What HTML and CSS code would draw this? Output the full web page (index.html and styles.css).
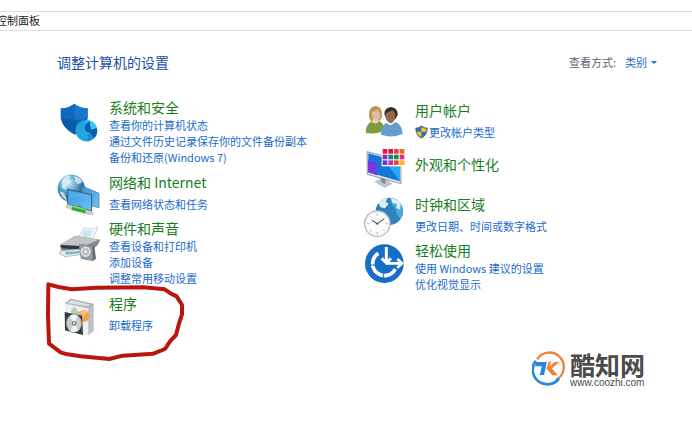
FILE: index.html
```html
<!DOCTYPE html>
<html lang="zh-CN">
<head>
<meta charset="utf-8">
<meta name="viewport" content="width=device-width, initial-scale=1">
<title>控制面板</title>
<link rel="stylesheet" href="styles.css">
</head>
<body>
<nav class="address">控制面板</nav>
<main class="panel">
  <header class="panel-head">
    <h1 class="title">调整计算机的设置</h1>
    <div class="view">
      <span id="view-label">查看方式:</span>
      <button class="view-button" type="button" aria-describedby="view-label">类别<span class="caret"></span></button>
    </div>
  </header>
  <div class="columns">
    <div class="column">
      <section class="category">
        <svg class="icon" viewBox="21 24 132 120" aria-hidden="true">
          <path d="M73 41Q88 54 113 55V87Q106 120 74 134Q38 116 32 84V55Q57 53 73 41Z" fill="#1268bd"/>
          <path d="M73 41Q88 54 113 55V83L73 91Z" fill="#1876cc"/>
          <path d="M33 84L80 90L76 133Q38 116 33 84Z" fill="#0b5bab"/>
          <circle cx="109" cy="122" r="32" fill="#20a7df"/>
          <path d="M109 122V90A32 32 0 0 1 132 145Z" fill="#43c4ee"/>
          <path d="M119 94Q104 101 105 116Q106 126 119 128L132 145Q145 132 140 114L123 119Z" fill="#075fae"/>
          <path d="M109 154A32 32 0 0 0 132 145L119 128Z" fill="#168bcd"/>
        </svg>
        <div class="body">
          <h2><a href="#">系统和安全</a></h2>
          <ul><li><a href="#">查看你的计算机状态</a></li><li><a href="#">通过文件历史记录保存你的文件备份副本</a></li><li><a href="#">备份和还原(Windows 7)</a></li></ul>
        </div>
      </section>
      <section class="category single">
        <svg class="icon" viewBox="21 21 132 120" aria-hidden="true">
          <defs><radialGradient id="globe" cx=".38" cy=".3"><stop offset="0" stop-color="#d2edf8"/><stop offset=".6" stop-color="#65aed3"/><stop offset="1" stop-color="#3177a6"/></radialGradient>
          <linearGradient id="screen" x2="1" y2="1"><stop stop-color="#3796e1"/><stop offset="1" stop-color="#68c4f3"/></linearGradient></defs>
          <circle cx="64" cy="70" r="41" fill="url(#globe)"/>
          <path d="M35 47Q46 30 62 33L57 43L65 50L51 60L47 74L36 68ZM73 33Q91 36 98 51L84 58L75 48ZM29 79L42 83L52 108Q32 96 29 79Z" fill="#e0eff2" opacity=".8"/>
          <path d="M96 63L147 85V129L96 112Z" fill="url(#screen)" stroke="#526d80" stroke-width="2"/>
          <path d="M53 73L125 89V138L53 119Z" fill="url(#screen)" stroke="#3f5c70" stroke-width="3"/>
          <path d="M56 77L123 93L56 99Z" fill="#75bff0" opacity=".35"/>
          <path d="M89 119V132" stroke="#778" stroke-width="6"/>
          <path d="M52 124L66 128M108 142L125 145" stroke="#c4ccce" stroke-width="12" stroke-linecap="round"/>
          <path d="M66 128L107 138" stroke="#3da345" stroke-width="15"/><path d="M67 124L108 134" stroke="#8ce077" stroke-width="4"/>
        </svg>
        <div class="body">
          <h2><a href="#">网络和 Internet</a></h2>
          <ul><li><a href="#">查看网络状态和任务</a></li></ul>
        </div>
      </section>
      <section class="category">
        <svg class="icon" viewBox="21 -3 132 120" aria-hidden="true">
          <path d="M83 54L102 23Q122 32 144 20L127 61Z" fill="#f3f8fb" stroke="#b8c0c5" stroke-width="2"/>
          <path d="M101 31L95 48L119 54L130 31Z" fill="#cee4f0"/>
          <path d="M30 74L76 47L151 59L143 75L108 106L34 95Z" fill="#85898b"/>
          <path d="M30 74L76 48L145 59L102 79Z" fill="#c2c5c6"/>
          <path d="M31 75L101 79L103 91L35 85Z" fill="#323a40"/>
          <path d="M32 92L94 87L100 103L45 110L28 101Z" fill="#e6ebed" stroke="#9ca4a8" stroke-width="2"/>
          <path d="M44 96L91 93L95 99L49 104Z" fill="#7fbac2"/>
          <path d="M87 72L133 77L138 116L129 123L93 116Z" fill="#626c74"/>
          <path d="M87 72L127 78L129 122L93 115Z" fill="#929ca2"/>
          <circle cx="107" cy="95" r="17" fill="#dadfe1" stroke="#7d878d" stroke-width="2"/><circle cx="107" cy="95" r="10" fill="#b4bcc0"/><circle cx="107" cy="95" r="4" fill="#fff"/>
        </svg>
        <div class="body">
          <h2><a href="#">硬件和声音</a></h2>
          <ul><li><a href="#">查看设备和打印机</a></li><li><a href="#">添加设备</a></li><li><a href="#">调整常用移动设置</a></li></ul>
        </div>
      </section>
      <section class="category single">
        <svg class="icon" viewBox="51 54 132 120" aria-hidden="true">
          <path d="M75 84L92 71L161 87V168L145 181L75 164Z" fill="#c7cbcd"/>
          <path d="M75 84L92 71L161 87L151 99Z" fill="#a9afb3"/><path d="M80 84L95 76L153 89L144 94Z" fill="#e0e3e5"/>
          <path d="M75 86L145 101V180L75 164Z" fill="#eef0f1"/><path d="M145 101L160 90V168L145 180Z" fill="#bcc3c8"/>
          <path d="M93 111Q94 96 107 98L118 113L103 126Z" fill="#a9d3b6"/>
          <circle cx="131" cy="123" r="18" fill="#efa54d"/><path d="M131 123L118 111A18 18 0 0 1 144 111Z" fill="#f5c37e"/>
          <path d="M74 111L126 122L129 180L75 166Z" fill="#373b3d"/>
          <ellipse cx="102" cy="145" rx="23" ry="27" fill="#c6cecf" stroke="#82898c" stroke-width="2"/>
          <path d="M102 145L89 123Q101 114 113 123ZM102 145L91 168Q104 175 115 166Z" fill="#f4f6f5"/>
          <circle cx="102" cy="145" r="7" fill="#777f82"/><circle cx="102" cy="145" r="3" fill="#fff"/>
        </svg>
        <div class="body">
          <h2><a href="#">程序</a></h2>
          <ul><li><a href="#">卸载程序</a></li></ul>
        </div>
        <svg class="marker" viewBox="0 0 480 285" aria-hidden="true"><path d="M25 28L56 36L95 43L170 38L310 37L374 43L393 56L410 64L426 90L426 118L416 149L408 180L390 199L375 222L340 236L248 242L208 252L122 244L82 238L62 232L46 220L27 206Q22 120 25 28Z"/></svg>
      </section>
    </div>
    <div class="column column-right">
      <section class="category single">
        <svg class="icon" viewBox="24 33 132 120" aria-hidden="true">
          <path d="M42 84Q39 53 62 51Q83 52 81 84L72 98H48Z" fill="#b79851"/>
          <path d="M50 70Q59 68 67 61Q75 70 76 82Q71 98 60 97Q51 92 50 70Z" fill="#e1b899"/>
          <path d="M32 132Q33 104 49 98Q61 108 73 97Q87 104 88 123Q71 137 32 132Z" fill="#7f9c3d"/><path d="M51 96Q61 111 72 96L69 91H54Z" fill="#edceb7"/>
          <path d="M88 75Q88 56 109 54Q130 58 128 78L121 91H94Z" fill="#372e28"/>
          <path d="M91 74Q101 70 112 64L121 73Q122 96 109 103Q92 100 91 74Z" fill="#93694c"/>
          <path d="M78 137Q77 110 94 101Q107 115 121 99Q141 106 143 134Q112 149 78 137Z" fill="#659ccb"/><path d="M95 101Q108 117 119 99L109 106Z" fill="#d9e5ec"/>
        </svg>
        <div class="body">
          <h2><a href="#">用户帐户</a></h2>
          <ul><li><a class="guarded" href="#"><svg class="shield" viewBox="175 101 41 43" aria-hidden="true"><path d="M195 102Q204 109 215 109Q216 132 195 143Q175 132 176 109Q188 109 195 102Z" fill="#526673"/><path d="M195 107V122H180V113Q189 112 195 107ZM195 122H210Q207 132 195 138Z" fill="#2475bd"/><path d="M195 107Q203 112 211 113L210 122H195ZM180 122H195V138Q182 131 180 122Z" fill="#f7c536"/></svg>更改帐户类型</a></li></ul>
        </div>
      </section>
      <section class="category single">
        <svg class="icon" viewBox="24 9 132 120" aria-hidden="true">
          <path d="M58 113L82 100L113 119L89 132Z" fill="#bfc7cd"/><path d="M79 99L91 103V121L79 115Z" fill="#818d96"/>
          <path d="M36 23L138 49V119L37 91Z" fill="#e1e8ec" stroke="#65737b" stroke-width="2"/>
          <path d="M40 28L134 53V112L40 85Z" fill="#1475dd"/><path d="M83 40L134 53V112Z" fill="#28aaf3"/><path d="M39 50L66 57V94L39 85Z" fill="#7936e6"/>
          <path d="M80 14H149V67H80Z" fill="#fff"/>
          <g stroke-width="14" fill="none"><path d="M83 22H97" stroke="#df1c4d"/><path d="M100 22H114" stroke="#c8202c"/><path d="M117 22H131" stroke="#ec3a56"/><path d="M134 22H148" stroke="#ed6a22"/><path d="M83 39H97" stroke="#9828a6"/><path d="M100 39H114" stroke="#107f8e"/><path d="M117 39H131" stroke="#169538"/><path d="M134 39H148" stroke="#ed238c"/><path d="M83 56H97" stroke="#6239c5"/><path d="M100 56H114" stroke="#ca2aad"/><path d="M117 56H131" stroke="#ed4926"/><path d="M134 56H148" stroke="#ffb522"/></g>
        </svg>
        <div class="body"><h2 class="lone"><a href="#">外观和个性化</a></h2></div>
      </section>
      <section class="category single">
        <svg class="icon" viewBox="24 15 132 120" aria-hidden="true">
          <circle cx="103" cy="67" r="41" fill="#2d83bd"/><path d="M103 26A41 41 0 0 1 137 90Q120 73 123 61L112 48Z" fill="#4aaad7"/>
          <path d="M70 43Q82 27 98 27L92 38L101 44L90 58L77 55ZM108 27Q128 30 137 44L135 62L124 57L126 45L112 42Z" fill="#dceef1"/>
          <circle cx="67" cy="104" r="40" fill="#a8afb3"/><circle cx="67" cy="104" r="37" fill="#edf1f2"/><circle cx="67" cy="104" r="33" fill="#fafafa"/>
          <path d="M67 73V80M67 129V136M36 104H43M91 104H98M45 82L49 86M85 122L89 126M45 126L49 122" stroke="#828c92" stroke-width="2"/>
          <path d="M50 94L67 104L88 89" fill="none" stroke="#333e45" stroke-width="3"/><circle cx="67" cy="104" r="3" fill="#333e45"/>
        </svg>
        <div class="body">
          <h2><a href="#">时钟和区域</a></h2>
          <ul><li><a href="#">更改日期、时间或数字格式</a></li></ul>
        </div>
      </section>
      <section class="category">
        <svg class="icon" viewBox="24 6 132 120" aria-hidden="true">
          <circle cx="88" cy="74" r="58" fill="#166fc4"/>
          <path d="M70 43A36 36 0 1 0 121 90" fill="none" stroke="#fff" stroke-width="11"/>
          <path d="M94 24V70M80 58L94 72L108 58" fill="none" stroke="#fff" stroke-width="9"/>
          <path d="M94 73H139M127 60L141 73L127 86" fill="none" stroke="#fff" stroke-width="8"/>
          <path d="M85 97V124M62 78H38" stroke="#166fc4" stroke-width="3"/>
        </svg>
        <div class="body">
          <h2><a href="#">轻松使用</a></h2>
          <ul><li><a href="#">使用 Windows 建议的设置</a></li><li><a href="#">优化视觉显示</a></li></ul>
        </div>
      </section>
    </div>
  </div>
</main>
<footer class="brand">
  <svg class="brand-logo" viewBox="94 91 98 104" aria-hidden="true">
    <path d="M109 116A43 43 0 1 1 165 177" fill="none" stroke="#ef8237" stroke-width="7"/>
    <path d="M105 120A43 43 0 0 0 174 173" fill="none" stroke="#2587df" stroke-width="8"/>
    <path d="M105 124H138L130 162H117L123 136H103Z" fill="#2587df"/>
    <path d="M144 122L137 143L154 163H171L153 143L175 124H161L146 137L151 122Z" fill="#ef8237"/>
  </svg>
  <div class="brand-text"><strong>酷知网</strong><span>www.coozhi.com</span></div>
</footer>
</body>
</html>
```
FILE: styles.css
```css
* {
  box-sizing: border-box;
}

body {
  margin: 0;
  background: #fff;
  color: #222;
  font: 11px/16px "Noto Sans CJK SC", sans-serif;
}

h1, h2, ul {
  margin: 0;
  padding: 0;
  font-weight: 400;
}

ul {
  list-style: none;
}

a {
  color: #1a6bcb;
  text-decoration: none;
}

a:hover {
  text-decoration: underline;
}

.address {
  margin-top: 11px;
  padding-bottom: 2px;
  border: solid #dedede;
  border-width: 1px 0;
  text-indent: -4px;
}

.panel {
  padding: 21px 23px 0 57px;
}

.panel-head {
  display: flex;
  align-items: center;
  justify-content: space-between;
  margin-bottom: 26px;
  padding-right: 12px;
}

.title {
  color: #2450a8;
  font-size: 14px;
  line-height: 20px;
}

.view {
  display: flex;
  gap: 9px;
  color: #5b6472;
}

.view-button {
  display: flex;
  align-items: center;
  gap: 4px;
  padding: 0;
  border: 0;
  background: none;
  color: #1a6bcb;
  font: inherit;
}

.caret {
  border: 3px solid transparent;
  border-top-color: #1a6bcb;
  border-bottom: 0;
}

.columns {
  display: grid;
  grid-template-columns: 1fr 1fr;
}

.column {
  display: flex;
  flex-direction: column;
  gap: 7px;
}

.column-right {
  padding-top: 2px;
}

.category {
  position: relative;
  display: flex;
  gap: 8px;
  min-height: 40px;
}

.icon {
  flex: none;
  width: 44px;
  height: 40px;
  overflow: visible;
}

.body {
  white-space: nowrap;
}

.body h2 {
  font-size: 14px;
  line-height: 19px;
}

.body h2 a {
  color: #1a7d1f;
}

.single h2 {
  line-height: 21px;
}

.single ul {
  margin-top: 3px;
}

.single .lone {
  padding-top: 7px;
}

.guarded {
  display: flex;
  align-items: center;
  gap: 1px;
}

.shield {
  width: 13px;
  height: 14px;
}

.marker {
  position: absolute;
  top: -18px;
  left: -17px;
  width: 160px;
  height: 95px;
  pointer-events: none;
}

.marker path {
  fill: none;
  stroke: #b9160f;
  stroke-width: 12;
  stroke-linejoin: round;
}

.brand {
  display: flex;
  justify-content: flex-end;
  gap: 5px;
  margin-top: 18px;
  padding-right: 47px;
  color: #4b4b4b;
}

.brand-logo {
  width: 33px;
  height: 35px;
}

.brand-text {
  display: flex;
  flex-direction: column;
}

.brand-text strong {
  font-size: 25px;
  line-height: 26px;
}

.brand-text span {
  font: 10px/12px "Liberation Sans", sans-serif;
}
```
